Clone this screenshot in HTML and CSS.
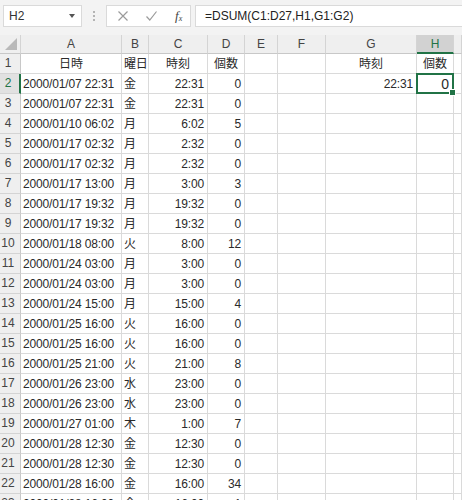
FILE: index.html
```html
<!DOCTYPE html>
<html lang="ja">
<head>
<meta charset="utf-8">
<title>Sheet</title>
<link rel="stylesheet" href="styles.css">
</head>
<body>
<div class="toolbar">
  <div class="namebox"><span class="name">H2</span><span class="caret"></span></div>
  <div class="dots"><i></i><i></i><i></i></div>
  <div class="btnbox">
    <svg class="ico" width="12" height="12" viewBox="0 0 12 12"><path d="M1.5 1.5 L10.5 10.5 M10.5 1.5 L1.5 10.5" stroke="#9b9b9b" stroke-width="1.2" fill="none"/></svg>
    <svg class="ico" width="13" height="12" viewBox="0 0 13 12"><path d="M1.5 6.5 L4.8 10 L11.5 1.5" stroke="#9b9b9b" stroke-width="1.2" fill="none"/></svg>
    <span class="fx">f<sub>x</sub></span>
  </div>
  <div class="formula">=DSUM(C1:D27,H1,G1:G2)</div>
</div>
<div class="sheet">
  <div class="corner"><span class="tri"></span></div>
  <div class="ch">A</div><div class="ch">B</div><div class="ch">C</div><div class="ch">D</div><div class="ch">E</div><div class="ch">F</div><div class="ch">G</div><div class="ch sel">H</div><div class="ch"></div>

  <div class="rh">1</div><div class="c ctr">日時</div><div class="c">曜日</div><div class="c ctr">時刻</div><div class="c ctr">個数</div><div class="c"></div><div class="c"></div><div class="c ctr">時刻</div><div class="c ctr">個数</div><div class="c"></div>
  <div class="rh sel">2</div><div class="c">2000/01/07 22:31</div><div class="c">金</div><div class="c r">22:31</div><div class="c r">0</div><div class="c"></div><div class="c"></div><div class="c r">22:31</div><div class="c r active">0<span class="handle"></span></div><div class="c"></div>
  <div class="rh">3</div><div class="c">2000/01/07 22:31</div><div class="c">金</div><div class="c r">22:31</div><div class="c r">0</div><div class="c"></div><div class="c"></div><div class="c"></div><div class="c"></div><div class="c"></div>
  <div class="rh">4</div><div class="c">2000/01/10 06:02</div><div class="c">月</div><div class="c r">6:02</div><div class="c r">5</div><div class="c"></div><div class="c"></div><div class="c"></div><div class="c"></div><div class="c"></div>
  <div class="rh">5</div><div class="c">2000/01/17 02:32</div><div class="c">月</div><div class="c r">2:32</div><div class="c r">0</div><div class="c"></div><div class="c"></div><div class="c"></div><div class="c"></div><div class="c"></div>
  <div class="rh">6</div><div class="c">2000/01/17 02:32</div><div class="c">月</div><div class="c r">2:32</div><div class="c r">0</div><div class="c"></div><div class="c"></div><div class="c"></div><div class="c"></div><div class="c"></div>
  <div class="rh">7</div><div class="c">2000/01/17 13:00</div><div class="c">月</div><div class="c r">3:00</div><div class="c r">3</div><div class="c"></div><div class="c"></div><div class="c"></div><div class="c"></div><div class="c"></div>
  <div class="rh">8</div><div class="c">2000/01/17 19:32</div><div class="c">月</div><div class="c r">19:32</div><div class="c r">0</div><div class="c"></div><div class="c"></div><div class="c"></div><div class="c"></div><div class="c"></div>
  <div class="rh">9</div><div class="c">2000/01/17 19:32</div><div class="c">月</div><div class="c r">19:32</div><div class="c r">0</div><div class="c"></div><div class="c"></div><div class="c"></div><div class="c"></div><div class="c"></div>
  <div class="rh">10</div><div class="c">2000/01/18 08:00</div><div class="c">火</div><div class="c r">8:00</div><div class="c r">12</div><div class="c"></div><div class="c"></div><div class="c"></div><div class="c"></div><div class="c"></div>
  <div class="rh">11</div><div class="c">2000/01/24 03:00</div><div class="c">月</div><div class="c r">3:00</div><div class="c r">0</div><div class="c"></div><div class="c"></div><div class="c"></div><div class="c"></div><div class="c"></div>
  <div class="rh">12</div><div class="c">2000/01/24 03:00</div><div class="c">月</div><div class="c r">3:00</div><div class="c r">0</div><div class="c"></div><div class="c"></div><div class="c"></div><div class="c"></div><div class="c"></div>
  <div class="rh">13</div><div class="c">2000/01/24 15:00</div><div class="c">月</div><div class="c r">15:00</div><div class="c r">4</div><div class="c"></div><div class="c"></div><div class="c"></div><div class="c"></div><div class="c"></div>
  <div class="rh">14</div><div class="c">2000/01/25 16:00</div><div class="c">火</div><div class="c r">16:00</div><div class="c r">0</div><div class="c"></div><div class="c"></div><div class="c"></div><div class="c"></div><div class="c"></div>
  <div class="rh">15</div><div class="c">2000/01/25 16:00</div><div class="c">火</div><div class="c r">16:00</div><div class="c r">0</div><div class="c"></div><div class="c"></div><div class="c"></div><div class="c"></div><div class="c"></div>
  <div class="rh">16</div><div class="c">2000/01/25 21:00</div><div class="c">火</div><div class="c r">21:00</div><div class="c r">8</div><div class="c"></div><div class="c"></div><div class="c"></div><div class="c"></div><div class="c"></div>
  <div class="rh">17</div><div class="c">2000/01/26 23:00</div><div class="c">水</div><div class="c r">23:00</div><div class="c r">0</div><div class="c"></div><div class="c"></div><div class="c"></div><div class="c"></div><div class="c"></div>
  <div class="rh">18</div><div class="c">2000/01/26 23:00</div><div class="c">水</div><div class="c r">23:00</div><div class="c r">0</div><div class="c"></div><div class="c"></div><div class="c"></div><div class="c"></div><div class="c"></div>
  <div class="rh">19</div><div class="c">2000/01/27 01:00</div><div class="c">木</div><div class="c r">1:00</div><div class="c r">7</div><div class="c"></div><div class="c"></div><div class="c"></div><div class="c"></div><div class="c"></div>
  <div class="rh">20</div><div class="c">2000/01/28 12:30</div><div class="c">金</div><div class="c r">12:30</div><div class="c r">0</div><div class="c"></div><div class="c"></div><div class="c"></div><div class="c"></div><div class="c"></div>
  <div class="rh">21</div><div class="c">2000/01/28 12:30</div><div class="c">金</div><div class="c r">12:30</div><div class="c r">0</div><div class="c"></div><div class="c"></div><div class="c"></div><div class="c"></div><div class="c"></div>
  <div class="rh">22</div><div class="c">2000/01/28 16:00</div><div class="c">金</div><div class="c r">16:00</div><div class="c r">34</div><div class="c"></div><div class="c"></div><div class="c"></div><div class="c"></div><div class="c"></div>
  <div class="rh">23</div><div class="c">2000/01/28 16:00</div><div class="c">金</div><div class="c r">16:00</div><div class="c r">1</div><div class="c"></div><div class="c"></div><div class="c"></div><div class="c"></div><div class="c"></div>
</div>
</body>
</html>
```

FILE: styles.css
```css
html, body {
  margin: 0;
  padding: 0;
  background: #ffffff;
  overflow: hidden;
  width: 462px;
  height: 500px;
}

body {
  font-family: "Liberation Sans", "Noto Sans CJK JP", sans-serif;
  color: #222222;
}

.toolbar {
  height: 35px;
  box-sizing: border-box;
  background: #f3f3f3;
  display: flex;
  align-items: flex-start;
  padding: 5px 0 0 3px;
}

.namebox {
  width: 79px;
  height: 22px;
  box-sizing: border-box;
  background: #fff;
  border: 1px solid #dadada;
  display: flex;
  align-items: center;
  justify-content: space-between;
  padding: 0 5px 0 5px;
  font-size: 12px;
  color: #333;
}

.caret {
  width: 0;
  height: 0;
  border-left: 3.5px solid transparent;
  border-right: 3.5px solid transparent;
  border-top: 4px solid #555;
  margin-right: 1px;
}

.dots {
  width: 24px;
  height: 22px;
  display: flex;
  flex-direction: column;
  align-items: center;
  justify-content: center;
  gap: 2px;
}

.dots i {
  display: block;
  width: 2px;
  height: 2px;
  background: #b4b4b4;
}

.btnbox {
  width: 85px;
  height: 22px;
  box-sizing: border-box;
  background: #fff;
  border: 1px solid #dadada;
  display: flex;
  align-items: center;
  padding: 0 0 0 10px;
}

.btnbox .ico:first-child {
  margin-right: 16px;
}

.btnbox .ico:nth-child(2) {
  margin-right: 17px;
}

.fx {
  font-family: "Liberation Serif", serif;
  font-style: italic;
  font-size: 13px;
  color: #444;
  line-height: 1;
}

.fx sub {
  font-size: 8px;
  vertical-align: -1px;
}

.formula {
  flex: 1;
  margin-left: 4px;
  height: 22px;
  box-sizing: border-box;
  background: #fff;
  border: 1px solid #dadada;
  border-right: none;
  font-size: 12px;
  line-height: 20px;
  padding-left: 9px;
  color: #222;
}

.sheet {
  display: grid;
  grid-template-columns: 21px 101px 27px 59px 37px 33px 48px 91px 37px 8px;
  grid-template-rows: 19px;
  grid-auto-rows: 20px;
  width: 462px;
}

.corner {
  background: #efefef;
  border-right: 1px solid #d4d4d4;
  border-bottom: 1px solid #c8c8c8;
  box-sizing: border-box;
  position: relative;
}

.tri {
  position: absolute;
  right: 3px;
  bottom: 3px;
  width: 0;
  height: 0;
  border-left: 12px solid transparent;
  border-bottom: 12px solid #b9b9b9;
}

.ch {
  background: #efefef;
  border-right: 1px solid #d4d4d4;
  border-bottom: 1px solid #c8c8c8;
  box-sizing: border-box;
  font-size: 12px;
  color: #444;
  text-align: center;
  line-height: 19px;
}

.ch.sel {
  background: #d2d2d2;
  color: #217346;
  border-bottom: 2px solid #217346;
  line-height: 18px;
}

.rh {
  background: #efefef;
  border-right: 1px solid #c8c8c8;
  border-bottom: 1px solid #d4d4d4;
  box-sizing: border-box;
  font-size: 12px;
  color: #444;
  text-align: center;
  padding-right: 4px;
  line-height: 19px;
}

.rh.sel {
  background: #e1e1e1;
  color: #217346;
  border-right: 2px solid #217346;
  padding-right: 3px;
}

.c {
  border-right: 1px solid #dadada;
  border-bottom: 1px solid #dadada;
  box-sizing: border-box;
  font-size: 12px;
  line-height: 20px;
  padding: 0 2px;
  white-space: nowrap;
  overflow: visible;
  letter-spacing: -0.15px;
  color: #2a2a2a;
}

.c.r {
  text-align: right;
  padding-right: 3px;
}

.c.ctr {
  text-align: center;
  letter-spacing: 0;
}

.c.active {
  position: relative;
  font-size: 14px;
  padding-right: 4px;
}

.c.active::after {
  content: "";
  position: absolute;
  left: -1px;
  top: -1px;
  right: -1px;
  bottom: -1px;
  border: 2px solid #217346;
}

.handle {
  position: absolute;
  right: -3px;
  bottom: -3px;
  width: 5px;
  height: 5px;
  background: #217346;
  border: 1px solid #fff;
  z-index: 2;
}
```
